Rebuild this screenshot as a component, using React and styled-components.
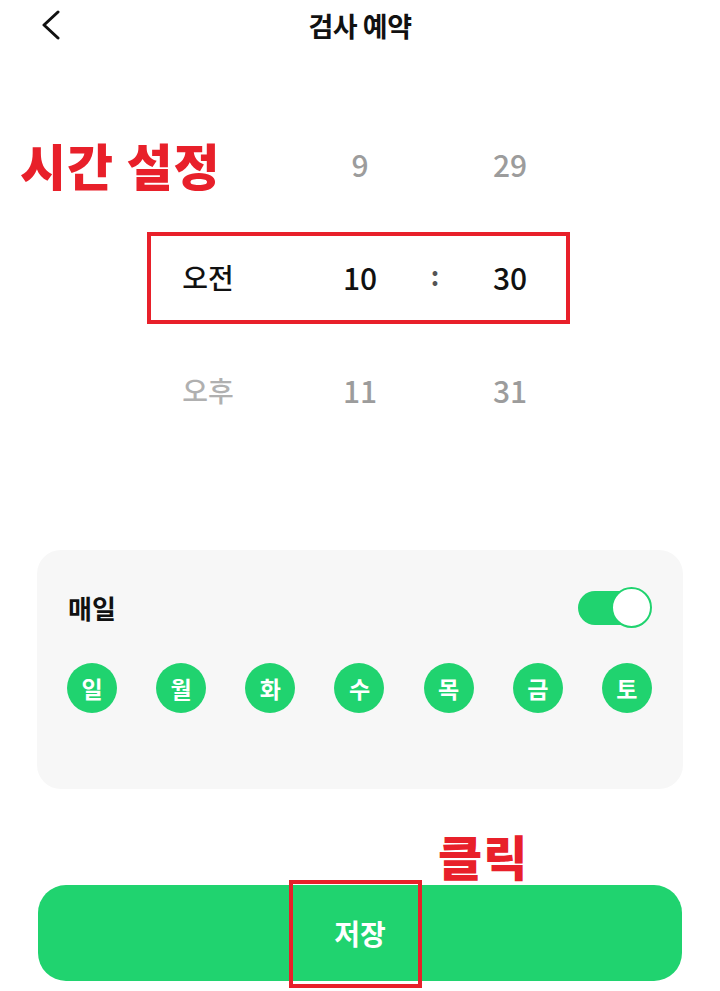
import React from "react";
import styled, { createGlobalStyle } from "styled-components";

const GREEN = "#20d36f";
const RED = "#e8202a";

const Global = createGlobalStyle`
  html, body { margin: 0; padding: 0; background: #fff; }
  body { font-family: "Noto Sans CJK KR", "Noto Sans", sans-serif; }
  * { box-sizing: border-box; }
`;

const Page = styled.div`
  width: 720px;
  height: 991px;
  display: flex;
  flex-direction: column;
  overflow: hidden;
`;

const Header = styled.header`
  position: relative;
  height: 50px;
  display: flex;
  align-items: center;
  justify-content: center;
`;

const BackButton = styled.button`
  position: absolute;
  left: 36px;
  top: 8px;
  width: 30px;
  height: 34px;
  border: none;
  background: none;
  padding: 0;
  display: flex;
  align-items: center;
  justify-content: center;
`;

const Title = styled.h1`
  margin: 0;
  font-size: 27px;
  font-weight: 700;
  color: #111;
  letter-spacing: -0.5px;
`;

const Picker = styled.section`
  position: relative;
  margin-top: 57px;
  display: flex;
  flex-direction: column;
`;

const PickerRow = styled.div`
  position: relative;
  height: 113px;
  display: grid;
  grid-template-columns: 120px 32px 120px 30px 120px;
  padding-left: 148px;
  align-items: center;
`;

const Cell = styled.div`
  text-align: center;
  font-size: ${(p) => (p.$ko ? "28px" : "30px")};
  font-weight: ${(p) => (p.$selected ? 500 : 500)};
  color: ${(p) => (p.$selected ? "#111" : p.$light ? "#b0b0b0" : "#9c9c9c")};
  grid-column: ${(p) => p.$col};
  line-height: 1;
`;

const Colon = styled.div`
  grid-column: 4;
  text-align: center;
  font-size: 26px;
  font-weight: 600;
  color: #555;
  line-height: 1;
  transform: translateY(-2px);
`;

const Highlight = styled.div`
  position: absolute;
  left: 147px;
  top: 12px;
  width: 423px;
  height: 92px;
  border: 4px solid ${RED};
  pointer-events: none;
`;

const Annotation = styled.div`
  position: absolute;
  left: ${(p) => p.$left}px;
  top: ${(p) => p.$top}px;
  color: ${RED};
  font-size: ${(p) => p.$size}px;
  font-weight: 900;
  line-height: 1;
  letter-spacing: 1px;
  white-space: nowrap;
`;

const Card = styled.section`
  margin: 104px 37px 0;
  height: 239px;
  background: #f7f7f7;
  border-radius: 24px;
  padding: 37px 31px 0 30px;
  display: flex;
  flex-direction: column;
  gap: 35px;
`;

const CardHead = styled.div`
  height: 41px;
  display: flex;
  align-items: center;
  justify-content: space-between;
`;

const CardLabel = styled.span`
  font-size: 26px;
  font-weight: 700;
  color: #111;
  padding-left: 1px;
`;

const Toggle = styled.div`
  position: relative;
  width: 74px;
  height: 41px;
  display: flex;
  align-items: center;
`;

const Track = styled.div`
  width: 64px;
  height: 34px;
  border-radius: 17px;
  background: ${GREEN};
`;

const Knob = styled.div`
  position: absolute;
  right: 0;
  top: 0;
  width: 41px;
  height: 41px;
  border-radius: 50%;
  background: #fff;
  border: 2px solid ${GREEN};
`;

const Days = styled.div`
  display: flex;
  justify-content: space-between;
`;

const Day = styled.div`
  width: 50px;
  height: 50px;
  border-radius: 50%;
  background: ${GREEN};
  color: #fff;
  font-size: 23px;
  font-weight: 700;
  display: flex;
  align-items: center;
  justify-content: center;
  line-height: 1;
`;

const Footer = styled.div`
  position: relative;
  margin: 96px 38px 0;
`;

const SaveButton = styled.button`
  width: 100%;
  height: 96px;
  border: none;
  border-radius: 28px;
  background: ${GREEN};
  color: #fff;
  font-family: inherit;
  font-size: 28px;
  font-weight: 700;
  display: flex;
  align-items: center;
  justify-content: center;
`;

const ClickBox = styled.div`
  position: absolute;
  left: 251px;
  top: -5px;
  width: 133px;
  height: 108px;
  border: 4px solid ${RED};
  pointer-events: none;
`;

const rows = [
  { ampm: "", h: "9", m: "29", sel: false },
  { ampm: "오전", h: "10", m: "30", sel: true },
  { ampm: "오후", h: "11", m: "31", sel: false },
];

const days = ["일", "월", "화", "수", "목", "금", "토"];

export default function App() {
  return (
    <Page>
      <Global />
      <Header>
        <BackButton aria-label="뒤로">
          <svg width="20" height="30" viewBox="0 0 20 30">
            <polyline
              points="17,2 3,15 17,28"
              fill="none"
              stroke="#111"
              strokeWidth="3"
              strokeLinecap="round"
              strokeLinejoin="round"
            />
          </svg>
        </BackButton>
        <Title>검사 예약</Title>
      </Header>

      <Picker>
        {rows.map((r, i) => (
          <PickerRow key={i}>
            {r.ampm && (
              <Cell $col={1} $ko $selected={r.sel} $light>
                {r.ampm}
              </Cell>
            )}
            <Cell $col={3} $selected={r.sel}>
              {r.h}
            </Cell>
            {r.sel && <Colon>:</Colon>}
            <Cell $col={5} $selected={r.sel}>
              {r.m}
            </Cell>
            {r.sel && <Highlight />}
          </PickerRow>
        ))}
        <Annotation $left={20} $top={32} $size={50}>시간 설정</Annotation>
      </Picker>

      <Card>
        <CardHead>
          <CardLabel>매일</CardLabel>
          <Toggle>
            <Track />
            <Knob />
          </Toggle>
        </CardHead>
        <Days>
          {days.map((d) => (
            <Day key={d}>{d}</Day>
          ))}
        </Days>
      </Card>

      <Footer>
        <Annotation $left={400} $top={-54} $size={48}>클릭</Annotation>
        <SaveButton>저장</SaveButton>
        <ClickBox />
      </Footer>
    </Page>
  );
}
